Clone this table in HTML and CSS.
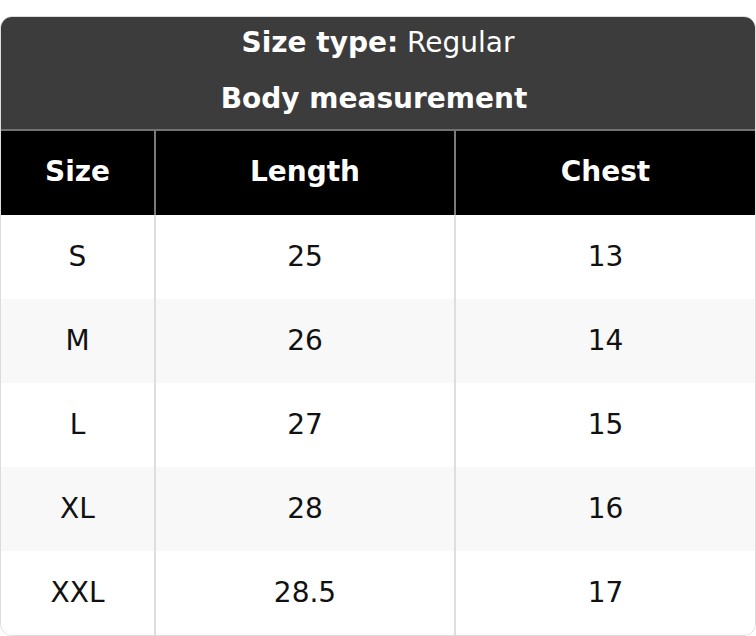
FILE: index.html
```html
<!DOCTYPE html>
<html>
<head>
<meta charset="utf-8">
<link rel="stylesheet" href="styles.css">
</head>
<body>
<div class="card">
  <div class="title">
    <div class="line"><b>Size type:</b> Regular</div>
    <div class="line sub"><b>Body measurement</b></div>
  </div>
  <div class="row head">
    <div class="cell">Size</div>
    <div class="cell">Length</div>
    <div class="cell">Chest</div>
  </div>
  <div class="row">
    <div class="cell">S</div>
    <div class="cell">25</div>
    <div class="cell">13</div>
  </div>
  <div class="row alt">
    <div class="cell">M</div>
    <div class="cell">26</div>
    <div class="cell">14</div>
  </div>
  <div class="row">
    <div class="cell">L</div>
    <div class="cell">27</div>
    <div class="cell">15</div>
  </div>
  <div class="row alt">
    <div class="cell">XL</div>
    <div class="cell">28</div>
    <div class="cell">16</div>
  </div>
  <div class="row">
    <div class="cell">XXL</div>
    <div class="cell">28.5</div>
    <div class="cell">17</div>
  </div>
</div>
</body>
</html>
```
FILE: styles.css
```css
html, body {
  margin: 0;
  padding: 0;
  background: #ffffff;
}
body {
  padding-top: 16px;
  font-family: "DejaVu Sans", "Liberation Sans", sans-serif;
  font-size: 28px;
  color: #111111;
}
.card {
  box-sizing: border-box;
  width: 756px;
  border: 1px solid #dcdcdc;
  border-radius: 12px;
  overflow: hidden;
}
.title {
  background: #3c3c3c;
  color: #ffffff;
  text-align: center;
  border-bottom: 2px solid #727272;
}
.line {
  box-sizing: border-box;
  height: 56px;
  line-height: 52px;
  padding-bottom: 4px;
}
.line.sub {
  padding-right: 8px;
}
.row {
  display: grid;
  grid-template-columns: 153px 300px 1fr;
  height: 84px;
  background: #ffffff;
}
.row.alt {
  background: #f8f8f8;
}
.cell {
  display: flex;
  align-items: center;
  justify-content: center;
  padding-bottom: 2px;
}
.cell + .cell {
  border-left: 2px solid #dedede;
}
.row.head {
  background: #000000;
  color: #ffffff;
  font-weight: bold;
}
.row.head .cell {
  padding-bottom: 4px;
}
.row.head .cell + .cell {
  border-left-color: #7a7a7a;
}
```
